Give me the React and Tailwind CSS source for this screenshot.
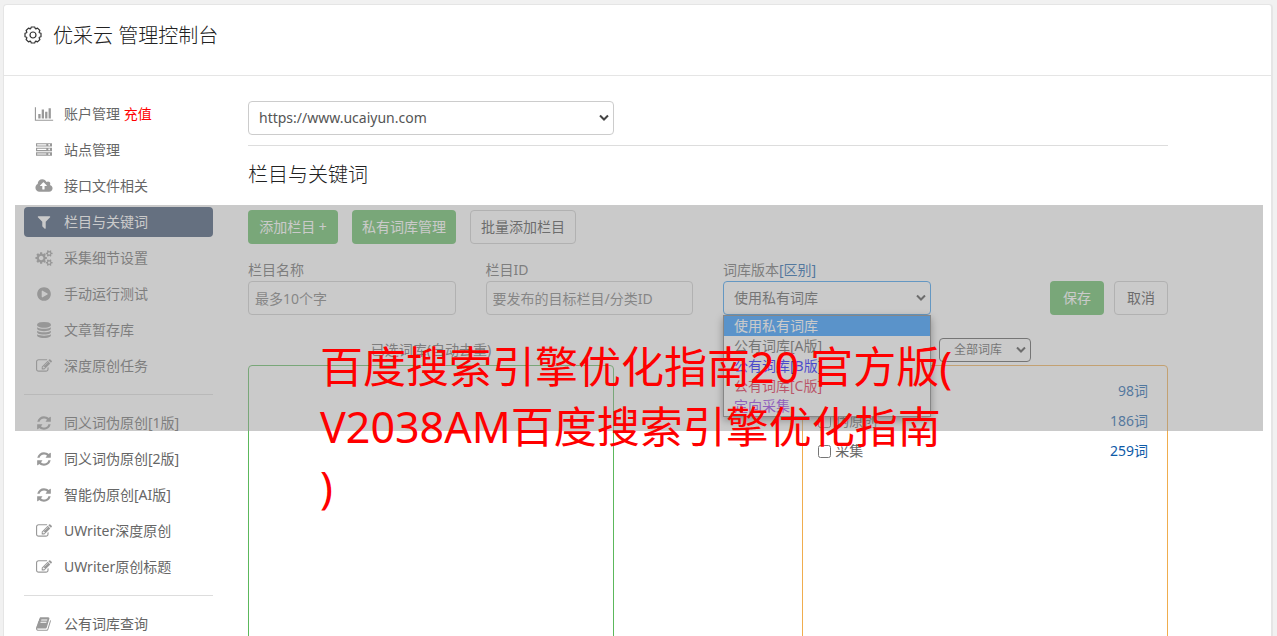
import React, { useState } from 'react';

const icons = {
    chart: { box: '0 0 2048 1792', d: 'M640 896v512h-256v-512h256zm384-512v1024h-256v-1024h256zm1024 1152v128h-2048v-1536h128v1408h1920zm-640-896v768h-256v-768h256zm384-384v1152h-256v-1152h256z' },
    server: { box: '0 0 1792 1792', d: 'M128 1408h1024v-128h-1024v128zm0-512h1024v-128h-1024v128zm1344 350a96 96 0 1 0 .1 0zM128 384h1024v-128h-1024v128zm1344 350a96 96 0 1 0 .1 0zm0-512a96 96 0 1 0 .1 0zM0 1152h1792v384h-1792zM0 640h1792v384h-1792zM0 128h1792v384h-1792z' },
    cloud: { box: '0 0 1920 1792', d: 'M1280 864q0-14-9-23l-352-352q-9-9-23-9t-23 9l-351 351q-10 12-10 24 0 14 9 23t23 9h224v352q0 13 9.5 22.5t22.5 9.5h192q13 0 22.5-9.5t9.5-22.5v-352h224q13 0 22.5-9.5t9.5-22.5zm640 288q0 159-112.5 271.5t-271.5 112.5h-1088q-185 0-316.5-131.5t-131.5-316.5q0-130 70-240t188-165q-2-30-2-43 0-212 150-362t362-150q156 0 285.5 87t188.5 231q71-62 166-62 106 0 181 75t75 181q0 76-41 138 130 31 213.5 135.5t83.5 238.5z' },
    filter: { box: '0 0 1792 1792', d: 'M1595 295q17 41-14 70l-493 493v742q0 42-39 59-13 5-25 5-27 0-45-19l-256-256q-19-19-19-45v-486l-493-493q-31-29-14-70 17-39 59-39h1280q42 0 59 39z' },
    cogs: { box: '0 0 1920 1792', d: 'M896 896q0-106-75-181t-181-75-181 75-75 181 75 181 181 75 181-75 75-181zm768 512q0-52-38-90t-90-38-90 38-38 90q0 53 37.5 90.5t90.5 37.5 90.5-37.5 37.5-90.5zm0-1024q0-52-38-90t-90-38-90 38-38 90q0 53 37.5 90.5t90.5 37.5 90.5-37.5 37.5-90.5zm-384 421v185q0 10-7 19.5t-16 10.5l-155 24q-11 35-32 76 34 48 90 115 7 11 7 20 0 12-7 19-23 30-82.5 89.5t-78.5 59.5q-11 0-21-7l-115-90q-37 19-77 31-11 108-23 155-7 24-30 24h-186q-11 0-20-7.5t-10-17.5l-23-153q-34-10-75-31l-118 89q-7 7-20 7-11 0-21-8-144-133-144-160 0-9 7-19 10-14 41-53t47-61q-23-44-35-82l-152-24q-10-1-17-9.5t-7-19.5v-185q0-10 7-19.5t16-10.5l155-24q11-35 32-76-34-48-90-115-7-11-7-20 0-12 7-20 22-30 82-89t79-59q11 0 21 7l115 90q34-18 77-32 11-108 23-154 7-24 30-24h186q11 0 20 7.5t10 17.5l23 153q34 10 75 31l118-89q8-7 20-7 11 0 21 8 144 133 144 160 0 8-7 19-12 16-42 54t-45 60q23 48 34 82l152 23q10 2 17 10.5t7 19.5zm640 533v140q0 16-149 31-12 27-30 52 51 113 51 138 0 4-4 7-122 71-124 71-8 0-46-47t-52-68q-20 2-30 2t-30-2q-14 21-52 68t-46 47q-2 0-124-71-4-3-4-7 0-25 51-138-18-25-30-52-149-15-149-31v-140q0-16 149-31 13-29 30-52-51-113-51-138 0-4 4-7 4-2 35-20t59-34 30-16q8 0 46 46.5t52 67.5q20-2 30-2t30 2q51-71 92-112l6-2q4 0 124 70 4 3 4 7 0 25-51 138 17 23 30 52 149 15 149 31zm0-1024v140q0 16-149 31-12 27-30 52 51 113 51 138 0 4-4 7-122 71-124 71-8 0-46-47t-52-68q-20 2-30 2t-30-2q-14 21-52 68t-46 47q-2 0-124-71-4-3-4-7 0-25 51-138-18-25-30-52-149-15-149-31v-140q0-16 149-31 13-29 30-52-51-113-51-138 0-4 4-7 4-2 35-20t59-34 30-16q8 0 46 46.5t52 67.5q20-2 30-2t30 2q51-71 92-112l6-2q4 0 124 70 4 3 4 7 0 25-51 138 17 23 30 52 149 15 149 31z' },
    play: { box: '0 0 1792 1792', d: 'M896 128q209 0 385.5 103t279.5 279.5 103 385.5-103 385.5-279.5 279.5-385.5 103-385.5-103-279.5-279.5-103-385.5 103-385.5 279.5-279.5 385.5-103zm384 823q32-18 32-55t-32-55l-544-320q-31-19-64-1-32 19-32 56v640q0 37 32 56 16 8 32 8 17 0 32-9z' },
    database: { box: '0 0 1792 1792', d: 'M896 768q237 0 443-43t325-127v170q0 69-103 128t-280 93.5-385 34.5-385-34.5-280-93.5-103-128v-170q119 84 325 127t443 43zm0 768q237 0 443-43t325-127v170q0 69-103 128t-280 93.5-385 34.5-385-34.5-280-93.5-103-128v-170q119 84 325 127t443 43zm0-384q237 0 443-43t325-127v170q0 69-103 128t-280 93.5-385 34.5-385-34.5-280-93.5-103-128v-170q119 84 325 127t443 43zm0-1152q208 0 385 34.5t280 93.5 103 128v128q0 69-103 128t-280 93.5-385 34.5-385-34.5-280-93.5-103-128v-128q0-69 103-128t280-93.5 385-34.5z' },
    edit: { box: '0 0 1792 1792', d: 'M888 1184l116-116-152-152-116 116v56h96v96h56zm440-720q-16-16-33 1l-350 350q-17 17-1 33t33-1l350-350q17-17 1-33zm80 594v190q0 119-84.5 203.5t-203.5 84.5h-832q-119 0-203.5-84.5t-84.5-203.5v-832q0-119 84.5-203.5t203.5-84.5h832q63 0 117 25 15 7 18 23 3 17-9 29l-49 49q-14 14-32 8-23-6-45-6h-832q-66 0-113 47t-47 113v832q0 66 47 113t113 47h832q66 0 113-47t47-113v-126q0-13 9-22l64-64q15-15 35-7t20 29zm-96-738l288 288-672 672h-288v-288zm444 132l-92 92-288-288 92-92q28-28 68-28t68 28l152 152q28 28 28 68t-28 68z' },
    refresh: { box: '0 0 1792 1792', d: 'M1639 1056q0 5-1 7-64 268-268 434.5t-478 166.5q-146 0-282.5-55t-243.5-157l-129 129q-19 19-45 19t-45-19-19-45v-448q0-26 19-45t45-19h448q26 0 45 19t19 45-19 45l-137 137q71 66 161 102t187 36q134 0 250-65t186-179q11-17 53-117 8-23 30-23h192q13 0 22.5 9.5t9.5 22.5zm25-800v448q0 26-19 45t-45 19h-448q-26 0-45-19t-19-45 19-45l138-138q-148-137-349-137-134 0-250 65t-186 179q-11 17-53 117-8 23-30 23h-199q-13 0-22.5-9.5t-9.5-22.5v-7q65-268 270-434.5t480-166.5q146 0 284 55.5t245 156.5l130-129q19-19 45-19t45 19 19 45z' },
    book: { box: '0 0 1792 1792', d: 'M1639 478q40 57 18 129l-275 906q-19 64-76.5 107.5t-122.5 43.5h-923q-77 0-148.5-53.5t-99.5-131.5q-24-67-2-127 0-4 3-27t4-37q1-8-3-21.5t-3-19.5q2-11 8-21t16.5-23.5 16.5-23.5q23-38 45-91.5t30-91.5q3-10 .5-30t-.5-28q3-11 17-28t17-23q21-36 42-92t25-90q1-9-2.5-32t.5-28q4-13 22-30.5t22-22.5q19-26 42.5-84.5t27.5-96.5q1-8-3-25.5t-2-26.5q2-8 9-18t18-23 17-21q8-12 16.5-30.5t15-35 16-36 19.5-32 26.5-23.5 36-11.5 47.5 5.5l-1 3q38-9 51-9h761q74 0 114 56t18 130l-274 906q-36 119-71.5 153.5t-128.5 34.5h-869q-27 0-38 15-11 16-1 43 24 70 144 70h923q29 0 56-15.5t35-41.5l300-987q7-22 5-57 38 15 59 43zm-1064 2q-4 13 2 22.5t20 9.5h608q13 0 25.5-9.5t16.5-22.5l21-64q4-13-2-22.5t-20-9.5h-608q-13 0-25.5 9.5t-16.5 22.5zm-83 256q-4 13 2 22.5t20 9.5h608q13 0 25.5-9.5t16.5-22.5l21-64q4-13-2-22.5t-20-9.5h-608q-13 0-25.5 9.5t-16.5 22.5z' },
};

const menuGroups = [
    [
        { icon: 'chart', label: '账户管理', extra: '充值' },
        { icon: 'server', label: '站点管理' },
        { icon: 'cloud', label: '接口文件相关' },
        { icon: 'filter', label: '栏目与关键词', active: true },
        { icon: 'cogs', label: '采集细节设置' },
        { icon: 'play', label: '手动运行测试' },
        { icon: 'database', label: '文章暂存库' },
        { icon: 'edit', label: '深度原创任务' },
    ],
    [
        { icon: 'refresh', label: '同义词伪原创[1版]' },
        { icon: 'refresh', label: '同义词伪原创[2版]' },
        { icon: 'refresh', label: '智能伪原创[AI版]' },
        { icon: 'edit', label: 'UWriter深度原创' },
        { icon: 'edit', label: 'UWriter原创标题' },
    ],
    [{ icon: 'book', label: '公有词库查询' }],
];

const versions = [
    { label: '使用私有词库', style: 'bg-[#1e90ff] text-white' },
    { label: '公有词库[A版]', style: 'text-[#555]' },
    { label: '公有词库[B版]', style: 'text-[#0000ff]' },
    { label: '公有词库[C版]', style: 'text-[#dc143c]' },
    { label: '定向采集', style: 'text-[#8a2be2]' },
];

const wordLists = [
    { id: 'a', label: '', count: '98词' },
    { id: 'b', label: '伪原创', count: '186词' },
    { id: 'c', label: '采集', count: '259词' },
];

const fieldClass = 'block w-full h-[34px] rounded border border-[#ccc] bg-white text-sm text-[#555]';
const greenButton = 'h-[34px] rounded bg-[#5cb85c] text-sm text-white';
const plainButton = 'h-[34px] rounded border border-[#ccc] bg-white text-sm text-[#444]';

const Icon = ({ name }) => (
    <svg viewBox={icons[name].box} className="h-4 w-5 shrink-0" fill="currentColor" fillRule={name === 'server' ? 'evenodd' : 'nonzero'} aria-hidden="true">
        <path d={icons[name].d} />
    </svg>
);

const Chevron = ({ className }) => (
    <svg viewBox="0 0 10 7" className={`pointer-events-none absolute top-1/2 h-[7px] w-[10px] -translate-y-1/2 ${className}`} fill="none" stroke="#444" strokeWidth="2" aria-hidden="true">
        <path d="M1 1l4 4 4-4" />
    </svg>
);

const Sidebar = () => (
    <nav className="w-[189px] shrink-0">
        {menuGroups.map((group, i) => (
            <ul key={i} className={`flex flex-col gap-1.5 ${i > 0 ? 'mt-[13px] border-t border-[#ddd] pt-[13px]' : ''}`}>
                {group.map((item) => (
                    <li key={item.label}>
                        <a
                            href="#"
                            className={`flex h-[30px] items-center gap-2.5 rounded pl-2.5 ${item.active ? 'bg-[#354a6a] text-white' : 'text-[#666]'}`}
                        >
                            <span className={item.active ? 'text-white' : 'text-[#999]'}>
                                <Icon name={item.icon} />
                            </span>
                            <span>
                                {item.label}
                                {item.extra && <span className="text-[#ff0000]"> {item.extra}</span>}
                            </span>
                        </a>
                    </li>
                ))}
            </ul>
        ))}
    </nav>
);

const App = () => {
    const [version, setVersion] = useState(versions[0].label);

    return (
        <div className="relative h-screen overflow-hidden bg-[#f1f1f1] pt-1 pr-1 pl-[3px] font-['Noto_Sans','Noto_Sans_CJK_SC',sans-serif] text-sm leading-5 text-[#666]">
            <div className="min-h-full rounded-t border border-r-2 border-[#e5e5e5] bg-white">
                <header className="flex h-[71px] items-center border-b border-[#e5e5e5] pb-2 pl-5">
                    <svg viewBox="-9 -9 18 18" className="mb-0.5 h-[18px] w-[18px]" fill="none" stroke="#333" strokeWidth="1.2" strokeLinejoin="round" aria-hidden="true">
                        <path d="M-1.7-8L1.7-8L2.3-6.4L2.8-6.1L4.5-6.9L6.9-4.5L6.1-2.8L6.4-2.3L8-1.7L8 1.7L6.4 2.3L6.1 2.8L6.9 4.5L4.5 6.9L2.8 6.1L2.3 6.4L1.7 8L-1.7 8L-2.3 6.4L-2.8 6.1L-4.5 6.9L-6.9 4.5L-6.1 2.8L-6.4 2.3L-8 1.7L-8-1.7L-6.4-2.3L-6.1-2.8L-6.9-4.5L-4.5-6.9L-2.8-6.1L-2.3-6.4z" />
                        <circle r="3" />
                    </svg>
                    <h1 className="ml-[11px] text-xl font-light text-[#222]">优采云 管理控制台</h1>
                </header>

                <div className="flex gap-[35px] pt-[23px] pl-5">
                    <Sidebar />

                    <main className="mr-[103px] flex-1 pt-0.5">
                        <div className="grid grid-cols-12 gap-x-[30px] border-b border-[#ddd] pb-2.5">
                            <div className="relative col-span-5">
                                <select aria-label="站点" className={`${fieldClass} appearance-none pl-2.5`}>
                                    <option>https://www.ucaiyun.com</option>
                                </select>
                                <Chevron className="right-[5px]" />
                            </div>
                        </div>

                        <h2 className="mt-[15px] text-xl leading-7 font-light text-[#222]">栏目与关键词</h2>

                        <div className="mt-[21px] flex gap-3.5">
                            <button className={`${greenButton} w-[90px]`}>添加栏目 +</button>
                            <button className={`${greenButton} w-[104px]`}>私有词库管理</button>
                            <button className={`${plainButton} w-[106px]`}>批量添加栏目</button>
                        </div>

                        {/* Column form */}
                        <form className="mt-4 grid grid-cols-4 items-end gap-x-[30px]">
                            <div>
                                <label htmlFor="name" className="block pb-px">栏目名称</label>
                                <input id="name" type="text" placeholder="最多10个字" className={`${fieldClass} px-1.5 placeholder:text-[#777]`} />
                            </div>
                            <div>
                                <label htmlFor="cid" className="block pb-px">栏目ID</label>
                                <input id="cid" type="text" placeholder="要发布的目标栏目/分类ID" className={`${fieldClass} px-1.5 placeholder:text-[#777]`} />
                            </div>
                            <div>
                                <div className="pb-px">
                                    <label htmlFor="version">词库版本</label>
                                    <a href="#" className="text-[#0e5aa7]">[区别]</a>
                                </div>
                                <div className="relative">
                                    <select
                                        id="version"
                                        className="block h-[34px] w-full appearance-none rounded border border-[#3399ee] bg-white pl-2.5 text-sm text-[#555]"
                                        value={version}
                                        onChange={(e) => setVersion(e.target.value)}
                                    >
                                        {versions.map((v) => <option key={v.label}>{v.label}</option>)}
                                    </select>
                                    <Chevron className="right-[5px]" />
                                    <ul className="absolute inset-x-0 top-full z-10 border border-[#767676] bg-white shadow-[0_3px_8px_rgba(0,0,0,0.5)]">
                                        {versions.map((v) => (
                                            <li key={v.label} className={`h-5 pl-2.5 ${v.style}`}>{v.label}</li>
                                        ))}
                                    </ul>
                                </div>
                            </div>
                            <div className="flex justify-end gap-2.5">
                                <button type="button" className={`${greenButton} w-[54px]`}>保存</button>
                                <button type="button" className={`${plainButton} w-[54px]`}>取消</button>
                            </div>
                        </form>

                        {/* Word list panels */}
                        <div className="mt-[22px] grid grid-cols-12 gap-x-[30px]">
                            <section className="col-span-5">
                                <h3 className="h-7 pt-[3px] text-center">已选词库(自动去重)</h3>
                                <div className="h-[400px] rounded border border-[#5cb85c]" />
                            </section>
                            <section className="col-span-5 col-start-8">
                                <div className="flex h-7 justify-center pt-px">
                                    <div className="relative h-6">
                                        <select aria-label="词库筛选" className="block h-6 w-[92px] appearance-none rounded border border-[#555] bg-white pl-3.5 text-xs text-[#555]">
                                            <option>全部词库</option>
                                        </select>
                                        <Chevron className="right-[5px]" />
                                    </div>
                                </div>
                                <div className="h-[400px] rounded border border-[#f0ad4e] px-[15px] pt-2.5">
                                    {wordLists.map((list) => (
                                        <div key={list.id} className="flex h-[30px] items-center gap-1">
                                            <input id={list.id} type="checkbox" aria-label={list.label || '词库'} className="h-[13px] w-[13px]" />
                                            <label htmlFor={list.id}>{list.label}</label>
                                            <a href="#" className="ml-auto pr-1 text-[#0e5aa7]">{list.count}</a>
                                        </div>
                                    ))}
                                </div>
                            </section>
                        </div>
                    </main>
                </div>
            </div>

            {/* Caption band over the page */}
            <div className="pointer-events-none absolute top-[205px] right-[14px] left-[15px] z-20 h-[226px] bg-[#969696]/50 pt-[132px] pl-[305px]">
                <p className="w-[650px] text-[43px] leading-[60px] text-[#ff0000]">
                    百度搜索引擎优化指南20 官方版(<br />
                    V2038AM百度搜索引擎优化指南<br />
                    )
                </p>
            </div>
        </div>
    );
};

export default App;
